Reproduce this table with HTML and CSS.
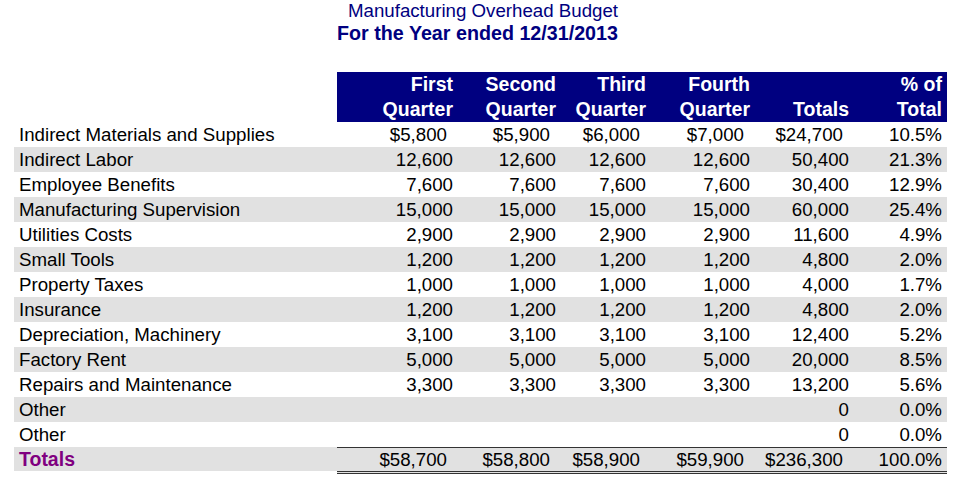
FILE: index.html
```html
<!DOCTYPE html>
<html lang="en">
<head>
<meta charset="utf-8">
<title>Manufacturing Overhead Budget</title>
<link rel="stylesheet" href="styles.css">
</head>
<body>
<header class="titles">
  <div class="title">Manufacturing Overhead Budget</div>
  <div class="subtitle">For the Year ended 12/31/2013</div>
</header>
<table class="budget">
  <colgroup>
    <col class="c-label"><col class="c-q1"><col class="c-q2"><col class="c-q3"><col class="c-q4"><col class="c-tot"><col class="c-pct">
  </colgroup>
  <thead>
    <tr>
      <th class="blank"></th>
      <th>First<br>Quarter</th>
      <th>Second<br>Quarter</th>
      <th>Third<br>Quarter</th>
      <th>Fourth<br>Quarter</th>
      <th><br>Totals</th>
      <th class="pct">% of<br>Total</th>
    </tr>
  </thead>
  <tbody>
    <tr><td class="label">Indirect Materials and Supplies</td><td class="cur">$5,800</td><td class="cur">$5,900</td><td class="cur">$6,000</td><td class="cur">$7,000</td><td class="cur">$24,700</td><td class="pct">10.5%</td></tr>
    <tr class="alt"><td class="label">Indirect Labor</td><td>12,600</td><td>12,600</td><td>12,600</td><td>12,600</td><td>50,400</td><td class="pct">21.3%</td></tr>
    <tr><td class="label">Employee Benefits</td><td>7,600</td><td>7,600</td><td>7,600</td><td>7,600</td><td>30,400</td><td class="pct">12.9%</td></tr>
    <tr class="alt"><td class="label">Manufacturing Supervision</td><td>15,000</td><td>15,000</td><td>15,000</td><td>15,000</td><td>60,000</td><td class="pct">25.4%</td></tr>
    <tr><td class="label">Utilities Costs</td><td>2,900</td><td>2,900</td><td>2,900</td><td>2,900</td><td>11,600</td><td class="pct">4.9%</td></tr>
    <tr class="alt"><td class="label">Small Tools</td><td>1,200</td><td>1,200</td><td>1,200</td><td>1,200</td><td>4,800</td><td class="pct">2.0%</td></tr>
    <tr><td class="label">Property Taxes</td><td>1,000</td><td>1,000</td><td>1,000</td><td>1,000</td><td>4,000</td><td class="pct">1.7%</td></tr>
    <tr class="alt"><td class="label">Insurance</td><td>1,200</td><td>1,200</td><td>1,200</td><td>1,200</td><td>4,800</td><td class="pct">2.0%</td></tr>
    <tr><td class="label">Depreciation, Machinery</td><td>3,100</td><td>3,100</td><td>3,100</td><td>3,100</td><td>12,400</td><td class="pct">5.2%</td></tr>
    <tr class="alt"><td class="label">Factory Rent</td><td>5,000</td><td>5,000</td><td>5,000</td><td>5,000</td><td>20,000</td><td class="pct">8.5%</td></tr>
    <tr><td class="label">Repairs and Maintenance</td><td>3,300</td><td>3,300</td><td>3,300</td><td>3,300</td><td>13,200</td><td class="pct">5.6%</td></tr>
    <tr class="alt"><td class="label">Other</td><td></td><td></td><td></td><td></td><td>0</td><td class="pct">0.0%</td></tr>
    <tr><td class="label">Other</td><td></td><td></td><td></td><td></td><td>0</td><td class="pct">0.0%</td></tr>
  </tbody>
  <tfoot>
    <tr class="alt total">
      <td class="label">Totals</td>
      <td class="cur">$58,700</td><td class="cur">$58,800</td><td class="cur">$58,900</td><td class="cur">$59,900</td><td class="cur">$236,300</td><td class="pct">100.0%</td>
    </tr>
  </tfoot>
</table>
</body>
</html>
```

FILE: styles.css
```css
html, body {
  margin: 0;
  padding: 0;
  background: #ffffff;
}

body {
  font-family: "Liberation Sans", Arial, sans-serif;
  font-size: 18.7px;
  color: #000000;
}

.titles {
  text-align: center;
  color: #000080;
  line-height: 22px;
  margin-bottom: 28px;
}

.title {
  font-weight: normal;
  padding-left: 3px;
}

.subtitle {
  font-weight: bold;
  font-size: 19.7px;
  padding-right: 8px;
}

.budget {
  margin-left: 14px;
  width: 933px;
  table-layout: fixed;
  border-collapse: separate;
  border-spacing: 0;
}

.c-label { width: 323px; }
.c-q1 { width: 120px; }
.c-q2 { width: 103px; }
.c-q3 { width: 90px; }
.c-q4 { width: 104px; }
.c-tot { width: 99px; }
.c-pct { width: 94px; }

.budget th,
.budget td {
  padding: 0 4px 0 0;
  line-height: 25px;
  height: 25px;
  text-align: right;
  vertical-align: baseline;
  white-space: nowrap;
}

.budget th {
  background: #000080;
  color: #ffffff;
  font-weight: bold;
  font-size: 19.5px;
  line-height: 25px;
}

.budget th.blank {
  background: transparent;
}

.budget .pct {
  padding-right: 5px;
}

.budget td.label {
  text-align: left;
  padding: 0 0 0 5px;
}

.budget td.cur {
  padding-right: 10px;
}

.budget tr.alt td {
  background: #e1e1e1;
}

.budget tr.total td {
  line-height: 23px;
  height: 23px;
  border-top: 1px solid #333333;
  border-bottom: 3px double #333333;
}

.budget tr.total td.label {
  border-top: 1px solid transparent;
  border-bottom: 3px solid #ffffff;
  color: #800080;
  font-weight: bold;
  font-size: 19.5px;
}
```
